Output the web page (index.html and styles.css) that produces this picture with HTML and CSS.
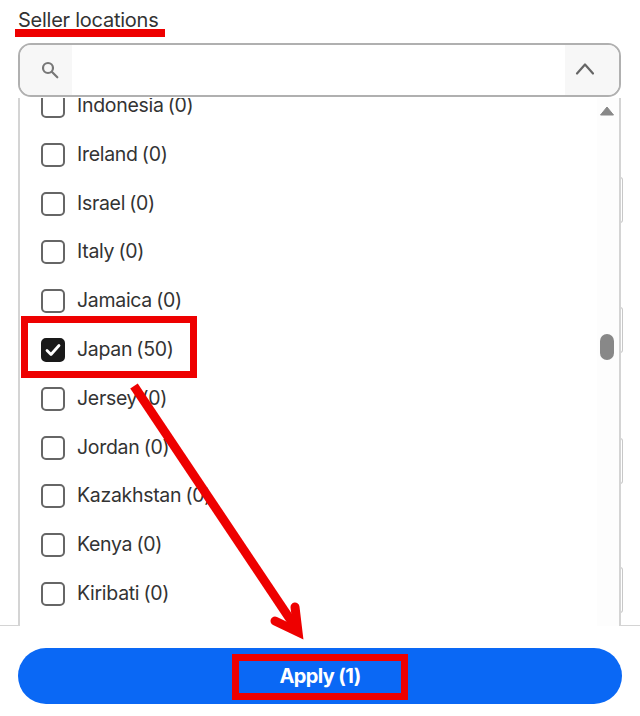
FILE: index.html
```html
<!DOCTYPE html>
<html lang="en">

<head>
  <meta charset="UTF-8">
  <title>Seller locations</title>
  <link rel="stylesheet" href="styles.css">
</head>

<body>
  <div class="page">
    <h2 class="title">Seller locations</h2>

    <div class="search">
      <div class="searchIcon">
        <svg width="18" height="18" viewBox="0 0 18 18" fill="none" stroke="#777" stroke-width="2.2">
          <circle cx="7" cy="7" r="5" />
          <path d="M10.800 10.800l5.500 5.500" stroke-linecap="round" />
        </svg>
      </div>
      <div class="searchInput"></div>
      <div class="searchToggle">
        <svg width="20" height="14" viewBox="0 0 20 14" fill="none" stroke="#666" stroke-width="2.2">
          <path d="M2 11.500l8-9 8 9" stroke-linecap="round" stroke-linejoin="round" />
        </svg>
      </div>
    </div>

    <div class="listWrap">
      <div class="list">
        <div class="item first"><span class="box"></span>Indonesia (0)</div>
        <div class="item"><span class="box"></span>Ireland (0)</div>
        <div class="item"><span class="box"></span>Israel (0)</div>
        <div class="item"><span class="box"></span>Italy (0)</div>
        <div class="item"><span class="box"></span>Jamaica (0)</div>
        <div class="item">
          <span class="box checked">
            <svg width="16" height="14" viewBox="0 0 16 14" fill="none" stroke="#fff" stroke-width="2.8">
              <path d="M2 7.500l4 4 8-9" stroke-linecap="round" stroke-linejoin="round" />
            </svg>
          </span>Japan (50)
        </div>
        <div class="item"><span class="box"></span>Jersey (0)</div>
        <div class="item"><span class="box"></span>Jordan (0)</div>
        <div class="item"><span class="box"></span>Kazakhstan (0)</div>
        <div class="item"><span class="box"></span>Kenya (0)</div>
        <div class="item"><span class="box"></span>Kiribati (0)</div>
      </div>
      <div class="scrollbar">
        <svg class="scrollUp" width="14" height="10" viewBox="0 0 14 10">
          <path d="M7 1l6.500 8h-13z" fill="#888" stroke="#888" stroke-linejoin="round" />
        </svg>
        <div class="thumb"></div>
      </div>
    </div>

    <div class="footer">
      <button class="apply">Apply (1)</button>
    </div>

    <!-- bits of the page behind the list -->
    <div class="peek" style="top: 177px"></div>
    <div class="peek" style="top: 307px"></div>
    <div class="peek" style="top: 438px"></div>
    <div class="peek" style="top: 567px"></div>

    <!-- red marks drawn on top of the screenshot -->
    <svg class="marks" width="640" height="716" viewBox="0 0 640 716" fill="none" stroke="#ee0000">
      <path d="M15 33h150" stroke-width="8" />
      <rect x="24.500" y="319.500" width="169" height="55" stroke-width="7" />
      <rect x="235.500" y="657.500" width="169" height="39" stroke-width="7" />
      <path d="M134 386L296 628" stroke-width="9" />
      <path d="M275 621l23 11-3-25" stroke-width="9" stroke-linecap="round" stroke-linejoin="miter" />
    </svg>
  </div>
</body>

</html>
```

FILE: styles.css
```css
* {
  box-sizing: border-box;
}
html,
body {
  margin: 0;
  background: #fff;
}
.page {
  position: relative;
  width: 640px;
  height: 716px;
  overflow: hidden;
  display: flex;
  flex-direction: column;
  font-family: Inter, "Liberation Sans", sans-serif;
  color: #333;
}
.title {
  margin: 0;
  padding: 9px 0 0 18px;
  height: 43px;
  font-size: 20px;
  font-weight: 400;
  line-height: 23px;
  letter-spacing: -0.25px;
}
.search {
  display: flex;
  margin-left: 18px;
  width: 603px;
  height: 54px;
  border: 2px solid #b0b0b0;
  border-radius: 13px;
  overflow: hidden;
}
.searchIcon {
  display: flex;
  align-items: center;
  justify-content: center;
  width: 52px;
  padding-left: 8px;
  background: #f7f7f7;
}
.searchInput {
  flex: 1;
}
.searchToggle {
  display: flex;
  align-items: center;
  justify-content: center;
  width: 54px;
  padding: 0 14px 2px 0;
  background: #f7f7f7;
}
.listWrap {
  position: relative;
  z-index: 1;
  display: flex;
  margin: 1px 0 -1px 18px;
  width: 603px;
  height: 528px;
  border-left: 2px solid #d4d4d4;
  border-right: 2px solid #d4d4d4;
  background: #fff;
  overflow: hidden;
}
.list {
  flex: 1;
}
.item {
  display: flex;
  align-items: center;
  gap: 12px;
  margin-top: 24.800px;
  height: 24px;
  font-size: 19.500px;
  line-height: 24px;
  letter-spacing: -0.3px;
  word-spacing: -1px;
  white-space: nowrap;
}
.item.first {
  margin-top: -5px;
}
.box {
  display: flex;
  align-items: center;
  justify-content: center;
  flex: none;
  margin: 2px 0 0 21px;
  width: 24px;
  height: 24px;
  border: 2px solid #666;
  border-radius: 5px;
  background: #fff;
}
.box.checked {
  border-color: #191919;
  background: #191919;
}
.scrollbar {
  display: flex;
  flex-direction: column;
  align-items: center;
  width: 22px;
  padding: 8px 2px 0 0;
  background: #fdfdfd;
}
.thumb {
  margin-top: 218px;
  width: 14px;
  height: 26px;
  border-radius: 7px;
  background: #888;
}
.footer {
  display: flex;
  justify-content: center;
  padding-top: 22px;
  border-top: 1px solid #d4d4d4;
}
.apply {
  width: 604px;
  height: 56px;
  border: none;
  border-radius: 28px;
  background: #0a68f5;
  color: #fff;
  font-family: inherit;
  font-size: 20px;
  font-weight: 700;
  letter-spacing: -0.6px;
}
.peek {
  position: absolute;
  left: 620px;
  width: 3px;
  height: 46px;
  border: 1px solid #c8c8c8;
  border-left: none;
  border-radius: 0 4px 4px 0;
}
.marks {
  position: absolute;
  top: 0;
  left: 0;
  z-index: 2;
}
```
